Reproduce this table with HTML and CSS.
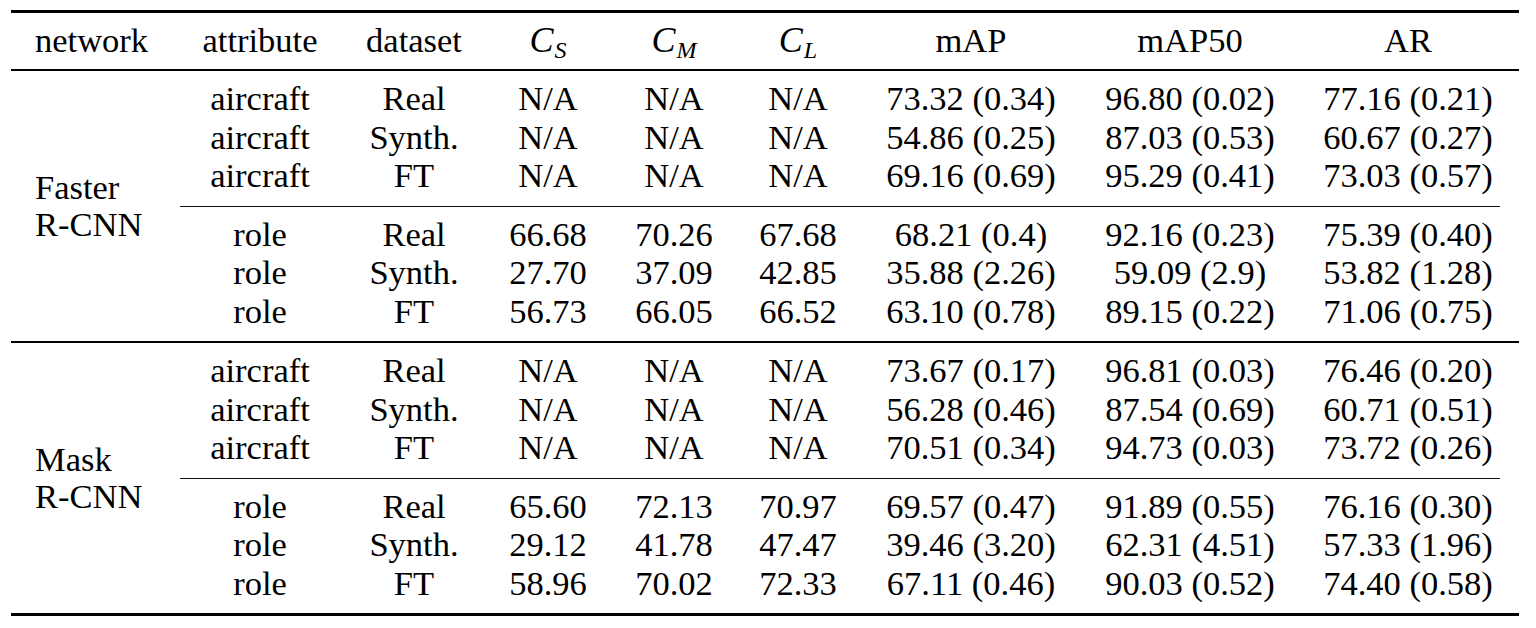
FILE: index.html
```html
<!DOCTYPE html>
<html>
<head>
<meta charset="utf-8">
<link rel="stylesheet" href="styles.css">
</head>
<body>
<div class="table">
  <div class="rule rule-top"></div>
  <div class="head">
    <div class="cell cell-net">network</div>
    <div class="cell">attribute</div>
    <div class="cell">dataset</div>
    <div class="cell"><span class="math">C</span><span class="msub">S</span></div>
    <div class="cell"><span class="math">C</span><span class="msub">M</span></div>
    <div class="cell"><span class="math">C</span><span class="msub">L</span></div>
    <div class="cell">mAP</div>
    <div class="cell">mAP50</div>
    <div class="cell">AR</div>
  </div>
  <div class="rule rule-head"></div>

  <div class="group">
    <div class="net">Faster<br>R-CNN</div>
    <div class="subs">
      <div class="subgroup">
        <div class="row"><div class="cell">aircraft</div><div class="cell">Real</div><div class="cell">N/A</div><div class="cell">N/A</div><div class="cell">N/A</div><div class="cell">73.32 (0.34)</div><div class="cell">96.80 (0.02)</div><div class="cell">77.16 (0.21)</div></div>
        <div class="row"><div class="cell">aircraft</div><div class="cell">Synth.</div><div class="cell">N/A</div><div class="cell">N/A</div><div class="cell">N/A</div><div class="cell">54.86 (0.25)</div><div class="cell">87.03 (0.53)</div><div class="cell">60.67 (0.27)</div></div>
        <div class="row"><div class="cell">aircraft</div><div class="cell">FT</div><div class="cell">N/A</div><div class="cell">N/A</div><div class="cell">N/A</div><div class="cell">69.16 (0.69)</div><div class="cell">95.29 (0.41)</div><div class="cell">73.03 (0.57)</div></div>
      </div>
      <div class="cmid"></div>
      <div class="subgroup">
        <div class="row"><div class="cell">role</div><div class="cell">Real</div><div class="cell">66.68</div><div class="cell">70.26</div><div class="cell">67.68</div><div class="cell">68.21 (0.4)</div><div class="cell">92.16 (0.23)</div><div class="cell">75.39 (0.40)</div></div>
        <div class="row"><div class="cell">role</div><div class="cell">Synth.</div><div class="cell">27.70</div><div class="cell">37.09</div><div class="cell">42.85</div><div class="cell">35.88 (2.26)</div><div class="cell">59.09 (2.9)</div><div class="cell">53.82 (1.28)</div></div>
        <div class="row"><div class="cell">role</div><div class="cell">FT</div><div class="cell">56.73</div><div class="cell">66.05</div><div class="cell">66.52</div><div class="cell">63.10 (0.78)</div><div class="cell">89.15 (0.22)</div><div class="cell">71.06 (0.75)</div></div>
      </div>
    </div>
  </div>
  <div class="rule rule-mid"></div>

  <div class="group">
    <div class="net">Mask<br>R-CNN</div>
    <div class="subs">
      <div class="subgroup">
        <div class="row"><div class="cell">aircraft</div><div class="cell">Real</div><div class="cell">N/A</div><div class="cell">N/A</div><div class="cell">N/A</div><div class="cell">73.67 (0.17)</div><div class="cell">96.81 (0.03)</div><div class="cell">76.46 (0.20)</div></div>
        <div class="row"><div class="cell">aircraft</div><div class="cell">Synth.</div><div class="cell">N/A</div><div class="cell">N/A</div><div class="cell">N/A</div><div class="cell">56.28 (0.46)</div><div class="cell">87.54 (0.69)</div><div class="cell">60.71 (0.51)</div></div>
        <div class="row"><div class="cell">aircraft</div><div class="cell">FT</div><div class="cell">N/A</div><div class="cell">N/A</div><div class="cell">N/A</div><div class="cell">70.51 (0.34)</div><div class="cell">94.73 (0.03)</div><div class="cell">73.72 (0.26)</div></div>
      </div>
      <div class="cmid"></div>
      <div class="subgroup">
        <div class="row"><div class="cell">role</div><div class="cell">Real</div><div class="cell">65.60</div><div class="cell">72.13</div><div class="cell">70.97</div><div class="cell">69.57 (0.47)</div><div class="cell">91.89 (0.55)</div><div class="cell">76.16 (0.30)</div></div>
        <div class="row"><div class="cell">role</div><div class="cell">Synth.</div><div class="cell">29.12</div><div class="cell">41.78</div><div class="cell">47.47</div><div class="cell">39.46 (3.20)</div><div class="cell">62.31 (4.51)</div><div class="cell">57.33 (1.96)</div></div>
        <div class="row"><div class="cell">role</div><div class="cell">FT</div><div class="cell">58.96</div><div class="cell">70.02</div><div class="cell">72.33</div><div class="cell">67.11 (0.46)</div><div class="cell">90.03 (0.52)</div><div class="cell">74.40 (0.58)</div></div>
      </div>
    </div>
  </div>
  <div class="rule rule-bottom"></div>
</div>
</body>
</html>
```

FILE: styles.css
```css
html, body {
  margin: 0;
  padding: 0;
  background: #ffffff;
}

body {
  font-family: "Liberation Serif", "Times New Roman", serif;
  font-size: 34.5px;
  color: #000000;
}

.table {
  width: 1508px;
  margin: 10px 0 0 11px;
}

.rule {
  background: #000000;
}

.rule-top {
  height: 3px;
}

.rule-head {
  height: 2px;
}

.rule-mid {
  height: 2px;
}

.rule-bottom {
  height: 3px;
}

.head {
  display: grid;
  grid-template-columns: 166px 166px 142px 126px 126px 122px 224px 214px 222px;
  padding: 8px 0 9.5px 0;
  line-height: 38.5px;
  height: 38.5px;
}

.cell {
  text-align: center;
  white-space: nowrap;
}

.cell-net {
  text-align: left;
  padding-left: 24px;
}

.math {
  font-style: italic;
  font-size: 36px;
  letter-spacing: 1px;
}

.msub {
  font-style: italic;
  font-size: 24px;
  line-height: 0;
  vertical-align: -6px;
}

.group {
  display: flex;
}

.net {
  width: 142px;
  padding-left: 24px;
  display: flex;
  align-items: center;
  line-height: 37.5px;
}

.subs {
  width: 1342px;
}

.subgroup {
  padding: 8px 0 11px 0;
}

.row {
  display: grid;
  grid-template-columns: 166px 142px 126px 126px 122px 224px 214px 222px;
  line-height: 38.5px;
  height: 38.5px;
}

.cmid {
  height: 1px;
  background: #111111;
  margin: 0 19px 0 3px;
}
```
